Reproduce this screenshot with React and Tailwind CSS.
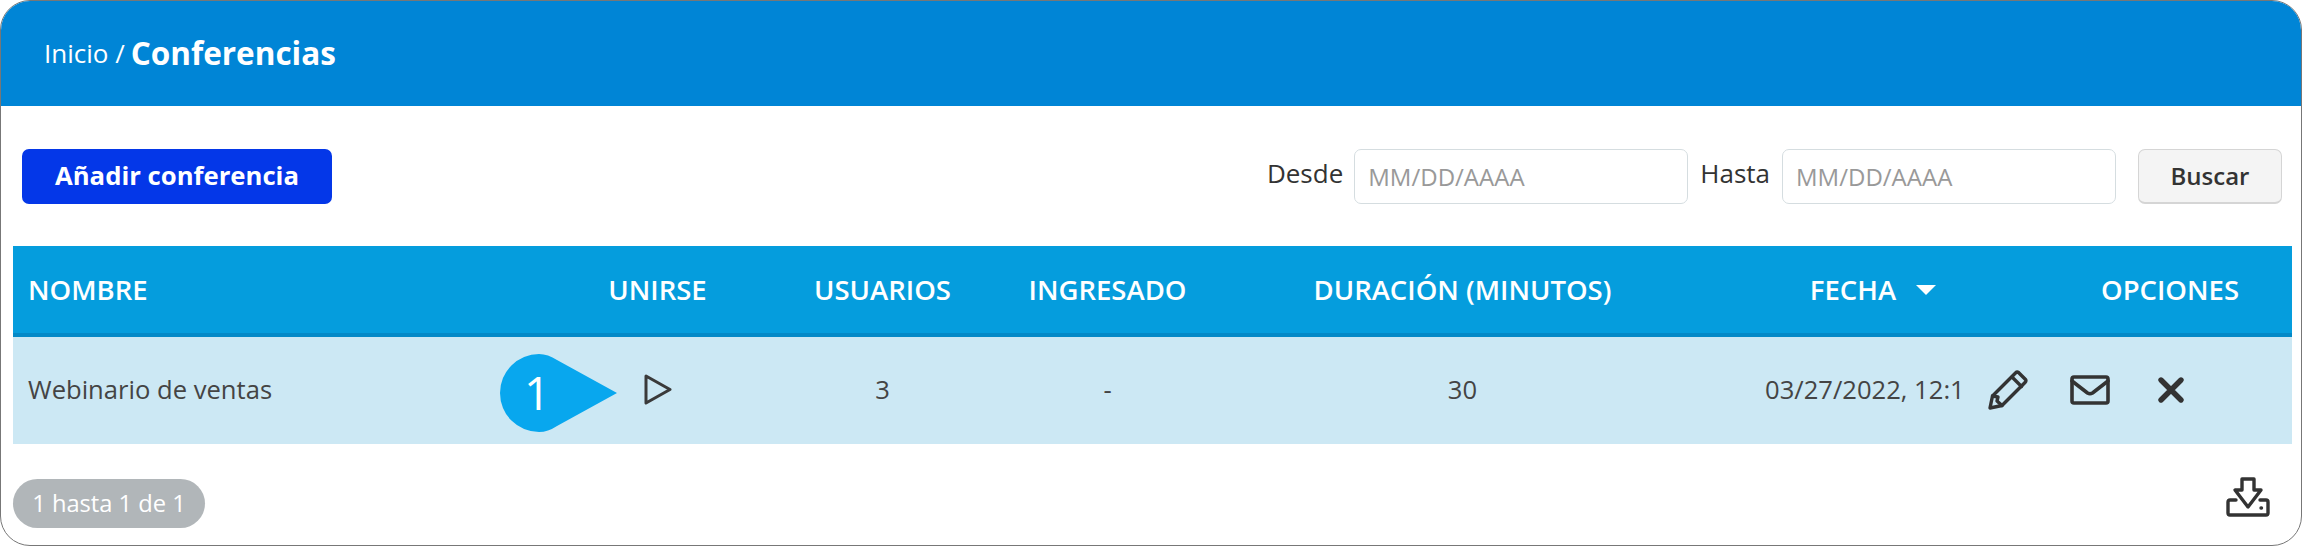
import React from 'react';

const font = { fontFamily: '"Open Sans", sans-serif' };

const PlayIcon = () => (
  <svg width="28" height="33" viewBox="0 0 28 33" fill="none" stroke="#3a3a3a" strokeWidth="3" strokeLinejoin="round">
    <path d="M2 3 L26 16.500 L2 30 Z" />
  </svg>
);

const PencilIcon = () => (
  <svg width="40" height="40" viewBox="0 0 40 40" fill="none" stroke="#333" strokeWidth="3.4" strokeLinejoin="round" strokeLinecap="round">
    <path d="M30.5 2.5 L37.5 9.5 Q38.5 11 37 12.5 L14 35.5 L2 38 L4.500 26 L27.500 3 Q29 1.500 30.500 2.500 Z" />
    <path d="M24 7 L33.500 16.500" />
    <path d="M4.500 26 L10 27 L9 31 L14 35.500" />
  </svg>
);

const MailIcon = () => (
  <svg width="40" height="30" viewBox="0 0 40 30" fill="none" stroke="#333" strokeWidth="3.6" strokeLinejoin="round" strokeLinecap="round">
    <rect x="2" y="2" width="36" height="26" rx="2" />
    <path d="M2 6 L17.500 18 Q20 19.500 22.500 18 L38 6" />
  </svg>
);

const CloseIcon = () => (
  <svg width="28" height="28" viewBox="0 0 28 28" fill="none" stroke="#333" strokeWidth="5.4" strokeLinecap="round">
    <path d="M4 4 L24 24 M24 4 L4 24" />
  </svg>
);

const DownloadIcon = () => (
  <svg width="44" height="40" viewBox="0 0 44 40" fill="none" stroke="#333" strokeWidth="3.4" strokeLinejoin="round" strokeLinecap="round">
    <path d="M16 2 H28 V13 H35 L22 30 L9 13 H16 Z" />
    <path d="M10 23 H4 Q2 23 2 25 V36 Q2 38 4 38 H40 Q42 38 42 36 V25 Q42 23 40 23 H34" />
    <path d="M35 31 H35.500" />
  </svg>
);

const columns = 'grid grid-cols-[547px_195px_255px_195px_515px_270px_302px] items-center';

const Bubble = () => (
  <div className="absolute left-[487px] top-[17px] w-[118px] h-[78px]">
    <svg width="118" height="78" viewBox="0 0 118 78" className="absolute inset-0">
      <path d="M39 0 Q48 0 57 6 L117 39 L57 72 Q48 78 39 78 A39 39 0 0 1 39 0 Z" fill="#08a7ee" />
    </svg>
    <span className="absolute left-[24px] top-[8px] text-[46px] leading-[60px] text-white">1</span>
  </div>
);

export default function App() {
  return (
    <div style={font} className="w-[2302px] h-[546px] bg-white border border-[#777] rounded-[30px] overflow-hidden flex flex-col">
      <header className="h-[105px] bg-[#0085d6] pl-[43px] flex items-center shrink-0 pb-[1px]">
        <span className="text-[26px] text-white">Inicio / </span>
        <span className="text-[31.5px] font-bold text-white ml-[6px]">Conferencias</span>
      </header>

      <div className="flex items-center justify-between h-[54px] mt-[43px] pl-[21px] pr-[19px] shrink-0">
        <button className="w-[310px] h-[55px] rounded-[7px] bg-[#0437e8] text-white text-[25.7px] font-bold">
          Añadir conferencia
        </button>
        <div className="flex items-center">
          <span className="text-[26px] text-[#333] font-medium mr-[11px] -mt-[6px]">Desde</span>
          <input
            placeholder="MM/DD/AAAA"
            className="w-[334px] h-[55px] rounded-[7px] border border-[#d5dde0] px-[13px] text-[24px] placeholder:text-[#999]"
          />
          <span className="text-[26px] text-[#333] font-medium ml-[12px] mr-[12px] -mt-[6px]">Hasta</span>
          <input
            placeholder="MM/DD/AAAA"
            className="w-[334px] h-[55px] rounded-[7px] border border-[#d5dde0] px-[13px] text-[24px] placeholder:text-[#999]"
          />
          <button className="w-[144px] h-[55px] ml-[22px] rounded-[7px] bg-[#f4f4f4] border border-[#d5d5d5] border-b-2 text-[24px] font-semibold text-[#333]">
            Buscar
          </button>
        </div>
      </div>

      <div className="ml-[12px] w-[2279px] mt-[43px] shrink-0">
        <div className={`${columns} h-[91px] bg-[#059ddd] border-b-[4px] border-[#0389c7] text-white text-[27.5px] font-semibold`}>
          <div className="pl-[15px]">NOMBRE</div>
          <div className="text-center">UNIRSE</div>
          <div className="text-center">USUARIOS</div>
          <div className="text-center">INGRESADO</div>
          <div className="text-center">DURACIÓN (MINUTOS)</div>
          <div className="flex items-center justify-center gap-[20px] pl-[36px]">
            FECHA
            <span className="w-0 h-0 border-x-[10px] border-x-transparent border-t-[10px] border-t-white" />
          </div>
          <div className="text-center pl-[58px]">OPCIONES</div>
        </div>
        <div className={`${columns} relative h-[107px] bg-[#cce8f4] text-[25.6px] text-[#444]`}>
          <div className="pl-[15px]">Webinario de ventas</div>
          <div className="flex justify-center -mt-[2px]"><PlayIcon /></div>
          <div className="text-center">3</div>
          <div className="text-center">-</div>
          <div className="text-center">30</div>
          <div className="pl-[45px] whitespace-nowrap">03/27/2022, 12:1</div>
          <div className="flex items-center -ml-[2px] -mt-[2px]">
            <PencilIcon />
            <span className="ml-[42px]"><MailIcon /></span>
            <span className="ml-[47px]"><CloseIcon /></span>
          </div>
          <Bubble />
        </div>
      </div>

      <div className="flex items-center justify-between pl-[12px] pr-[31px] mt-[35px]">
        <span className="h-[49px] w-[192px] rounded-full bg-[#b1b6b9] text-white text-[23.7px] flex items-center justify-center">
          1 hasta 1 de 1
        </span>
        <span className="-mt-[14px]"><DownloadIcon /></span>
      </div>
    </div>
  );
}
